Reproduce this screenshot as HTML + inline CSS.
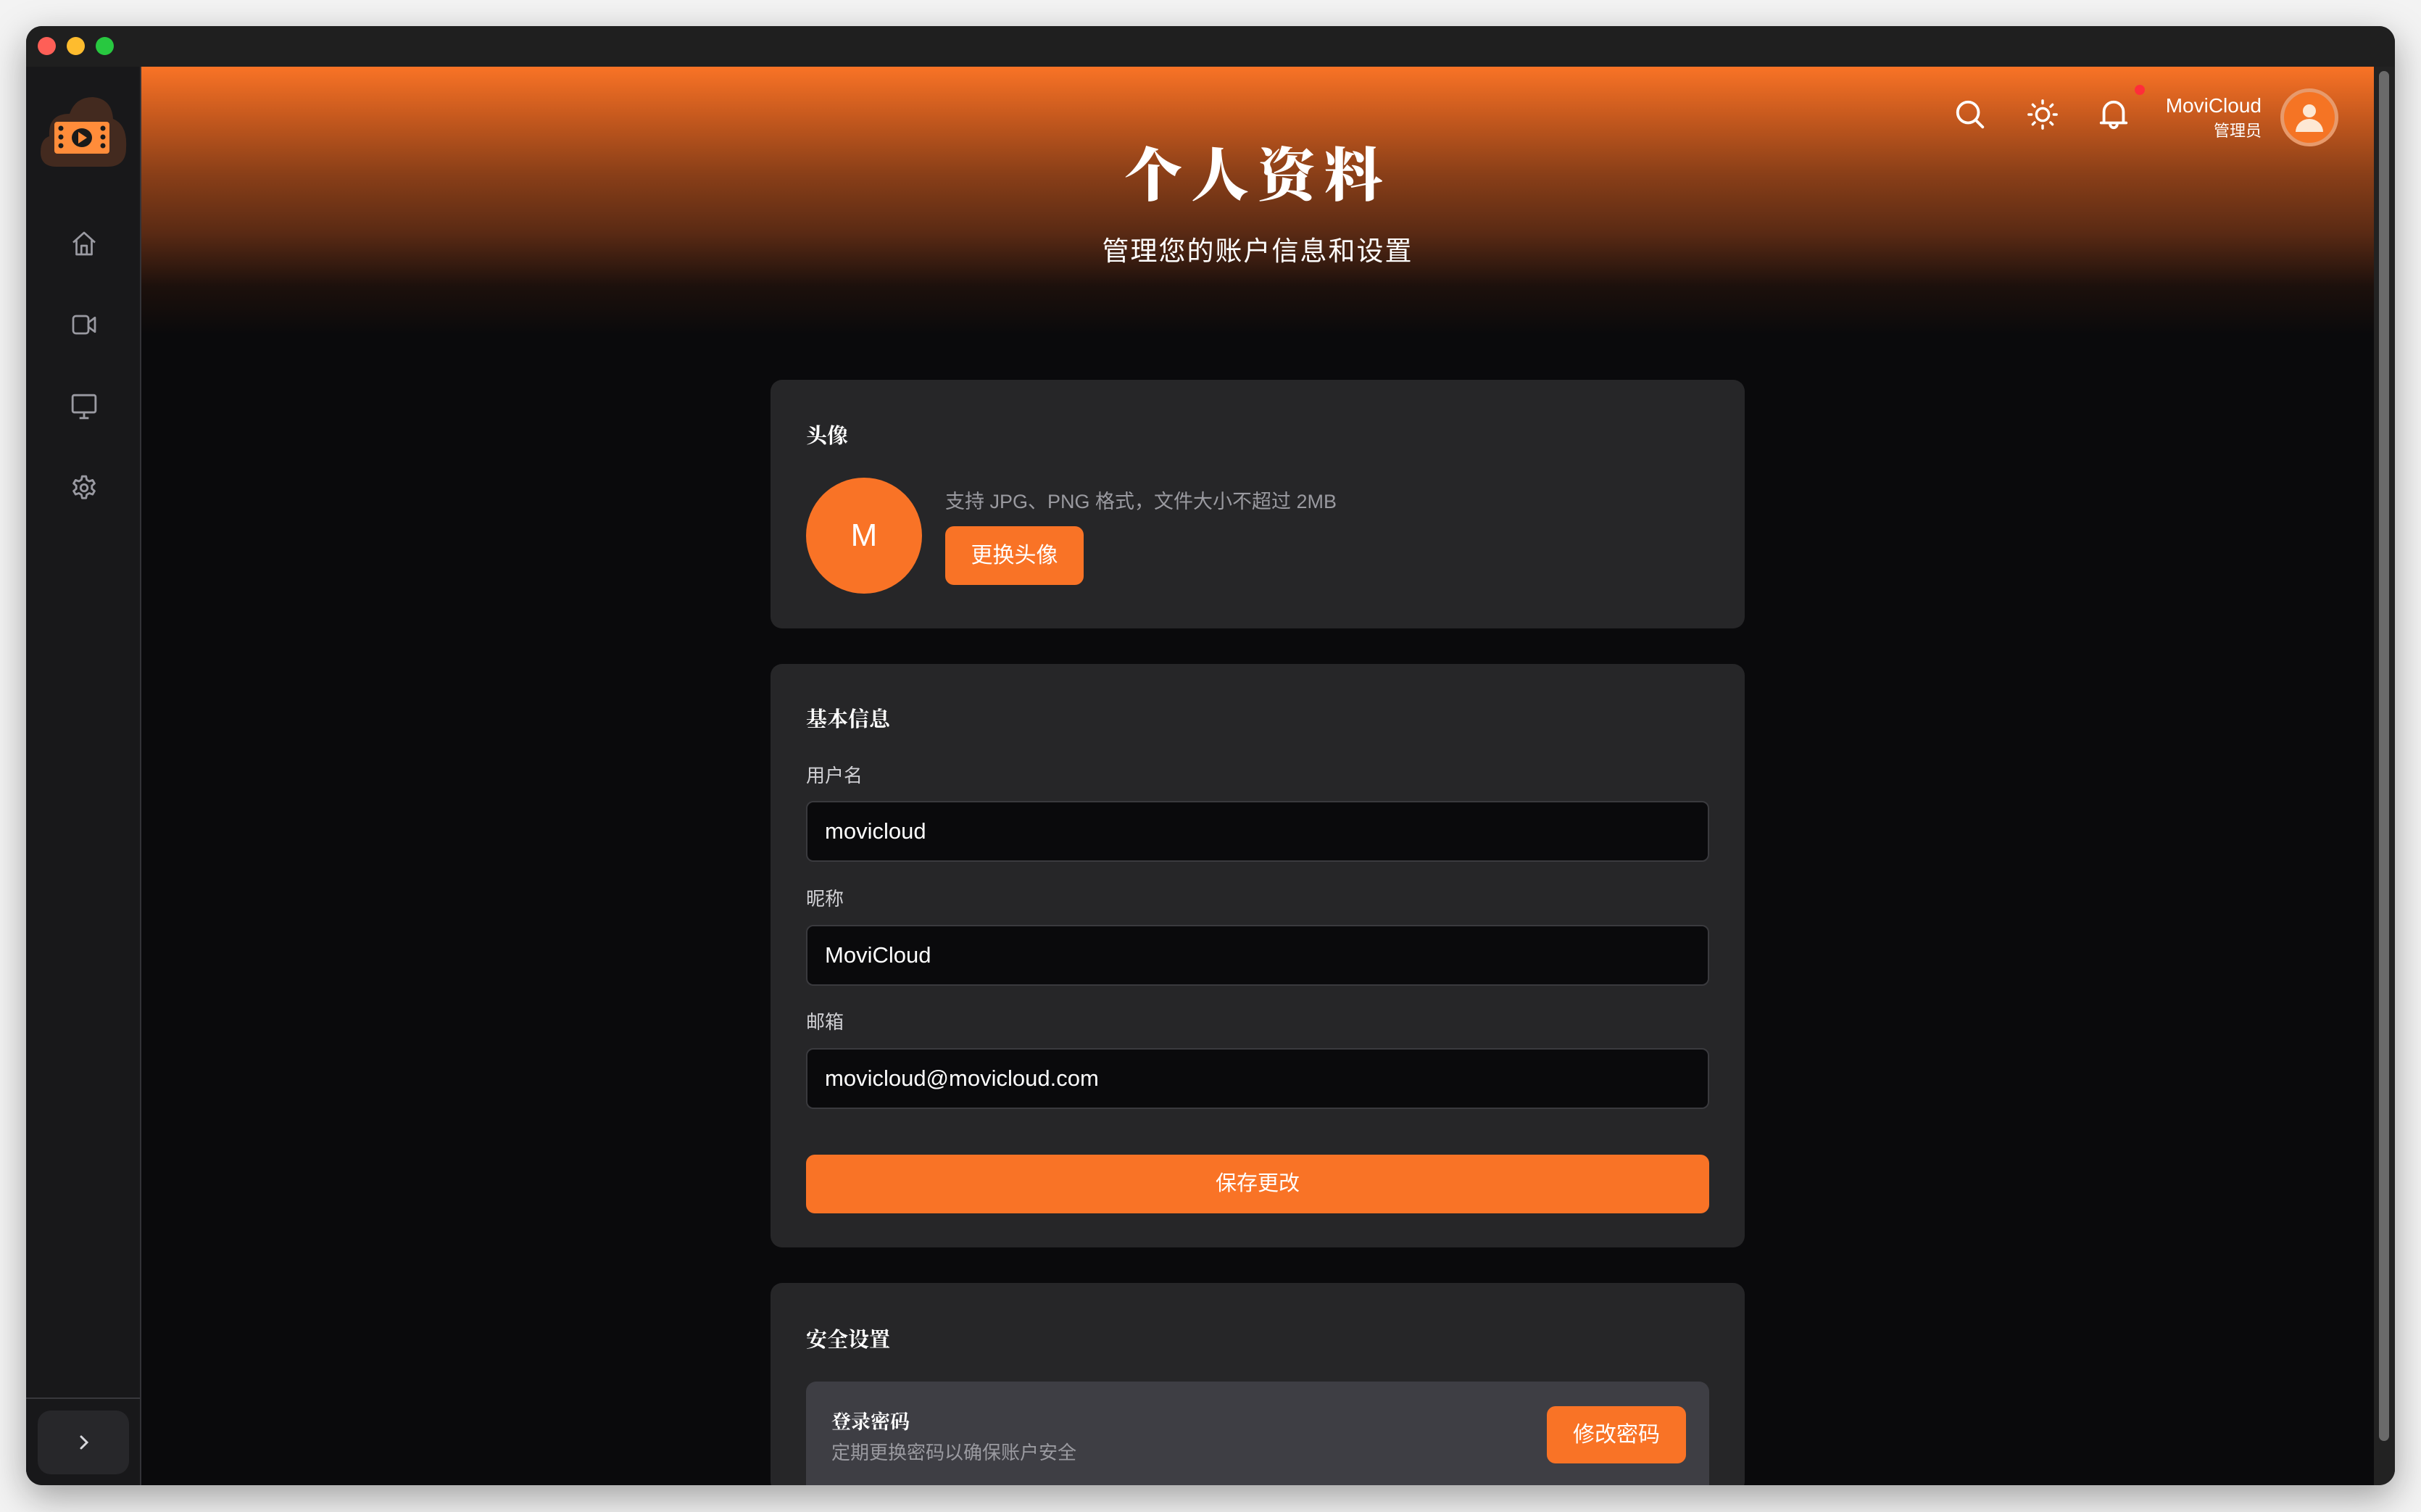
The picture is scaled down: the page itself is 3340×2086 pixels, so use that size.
<!DOCTYPE html>
<html><head><meta charset="utf-8"><style>
*{margin:0;padding:0;box-sizing:border-box}
html,body{overflow:hidden}
body{width:3340px;height:2086px;background:#f3f3f3;position:relative;overflow:hidden;font-family:"Liberation Sans","Noto Sans CJK SC",sans-serif}
.win{position:absolute;left:36px;top:36px;width:3268px;height:2013px;border-radius:22px;overflow:hidden;background:#0a0a0c;box-shadow:0 16px 50px rgba(0,0,0,.35)}
.tb{position:absolute;left:0;top:0;right:0;height:56px;background:#1f1f1f}
.dot{position:absolute;top:15px;width:25px;height:25px;border-radius:50%}
.side{position:absolute;left:0;top:56px;width:159px;bottom:0;background:#18181a;border-right:2px solid #333338}
.main{position:absolute;left:159px;top:56px;right:29px;bottom:0;background:#0a0a0c;overflow:hidden}
.hdr{position:absolute;left:0;top:0;right:0;height:370px;background:linear-gradient(180deg,#f97326 0%,#c85a1e 18%,#8a3f18 40%,#5a2a14 62%,#1c100c 82%,#0a0a0c 100%)}
.sb{position:absolute;right:0;top:56px;width:29px;bottom:0;background:#222}
.sb i{position:absolute;left:7px;top:6px;width:14px;height:1890px;border-radius:7px;background:#6a6a6a}
.card{position:absolute;left:868px;width:1344px;background:#262628;border-radius:16px;overflow:hidden}
.h{position:absolute;left:49px;color:#fff;font-family:"Noto Serif CJK SC",serif;font-weight:700;font-size:29px}
.lbl{position:absolute;left:49px;color:#d0d0d4;font-size:26px}
.inp{position:absolute;left:49px;width:1246px;height:84px;background:#0a0a0c;border:2px solid #3a3a3e;border-radius:10px;color:#fff;font-size:31px;padding-left:24px;line-height:80px}
.btn{position:absolute;background:#f97326;color:#fff;border-radius:12px;text-align:center;font-size:30px}
svg{position:absolute}
</style></head><body>
<div class="win">
<div class="tb"><div class="dot" style="left:16px;background:#fe5f57"></div><div class="dot" style="left:56px;background:#febc2e"></div><div class="dot" style="left:96px;background:#28c840"></div></div>
<div class="side">
<svg style="left:20px;top:40px" width="120" height="100" viewBox="0 0 120 100"><path d="M22 98 Q0 98 0 78 Q0 60 12 56 Q10 25 40 25 Q48 2 72 2 Q98 4 100 32 Q120 40 118 72 Q118 98 92 98Z" fill="#432a1f"/><rect x="19" y="36" width="76" height="44" rx="4" fill="#ff8c3a"/><circle cx="28" cy="45" r="3.5" fill="#1a1a1a"/><circle cx="28" cy="57" r="3.5" fill="#1a1a1a"/><circle cx="28" cy="69" r="3.5" fill="#1a1a1a"/><circle cx="86" cy="45" r="3.5" fill="#1a1a1a"/><circle cx="86" cy="57" r="3.5" fill="#1a1a1a"/><circle cx="86" cy="69" r="3.5" fill="#1a1a1a"/><ellipse cx="57" cy="58" rx="14" ry="13" fill="#1a1a1a"/><path d="M52 50 L64 58 L52 66Z" fill="#ff8c3a"/></svg>
<svg style="left:61px;top:226px" width="38" height="36" viewBox="0 0 24 24" fill="none" stroke="#9a9aa2" stroke-width="1.8" stroke-linejoin="round"><path d="M2 11 L12 2 L22 11 M5 9 V22 H19 V9 M9.5 22 V14 H14.5 V22"/></svg>
<svg style="left:61px;top:338px" width="38" height="36" viewBox="0 0 24 24" fill="none" stroke="#9a9aa2" stroke-width="1.8" stroke-linejoin="round"><rect x="2" y="4" width="14" height="16" rx="2.5"/><path d="M16 10 L22 5.5 V18.5 L16 14Z"/></svg>
<svg style="left:61px;top:450px" width="38" height="38" viewBox="0 0 24 24" fill="none" stroke="#9a9aa2" stroke-width="1.8" stroke-linejoin="round"><rect x="2" y="2" width="20" height="15" rx="1.5"/><path d="M12 17 V22 M8 22 H16"/></svg>
<svg style="left:61px;top:562px" width="38" height="38" viewBox="0 0 24 24" fill="none" stroke="#9a9aa2" stroke-width="1.8" stroke-linejoin="round"><path d="M10.3 2h3.4l.6 3 2.2 1.3 2.9-1 1.7 2.9-2.3 2v2.6l2.3 2-1.7 2.9-2.9-1-2.2 1.3-.6 3h-3.4l-.6-3-2.2-1.3-2.9 1-1.700-2.9 2.3-2v-2.6l-2.3-2 1.7-2.9 2.9 1 2.2-1.3z"/><circle cx="12" cy="12" r="3"/></svg>
<div style="position:absolute;left:0;right:0;top:1836px;height:2px;background:#38383c"></div>
<div style="position:absolute;left:16px;top:1854px;width:126px;height:88px;border-radius:18px;background:#27272a"></div>
<svg style="left:68px;top:1884px" width="24" height="28" viewBox="0 0 24 28" fill="none" stroke="#d8d8dc" stroke-width="3" stroke-linecap="round"><path d="M8 6 L16 14 L8 22"/></svg>
</div>
<div class="main">
<div class="hdr"></div>
<div style="position:absolute;left:0;right:0;top:104px;text-align:center;color:#fff;font-family:'Noto Serif CJK SC',serif;font-weight:900;font-size:80px;letter-spacing:12px;line-height:1">个人资料</div>
<div style="position:absolute;left:0;right:0;top:236px;text-align:center;color:#fff;font-size:37px;letter-spacing:2px;line-height:1">管理您的账户信息和设置</div>
<svg style="left:2500px;top:43px" width="46" height="46" viewBox="0 0 24 24" fill="none" stroke="#fff" stroke-width="2" stroke-linecap="round"><circle cx="10.5" cy="10.5" r="7.5"/><path d="M16 16 L21 21"/></svg>
<svg style="left:2600px;top:43px" width="46" height="46" viewBox="0 0 24 24" fill="none" stroke="#fff" stroke-width="1.8" stroke-linecap="round"><circle cx="12" cy="12" r="4.5"/><path d="M12 2v2M12 20v2M2 12h2M20 12h2M4.9 4.9l1.4 1.4M17.7 17.7l1.4 1.4M4.9 19.1l1.4-1.4M17.7 6.3l1.4-1.4"/></svg>
<svg style="left:2698px;top:41px" width="46" height="50" viewBox="0 0 24 26" fill="none" stroke="#fff" stroke-width="2" stroke-linejoin="round"><path d="M5 19 V11 A7 7 0 0 1 19 11 V19 H21 H3Z M9.5 20 A2.5 2.5 0 0 0 14.5 20"/></svg>
<div style="position:absolute;left:2750px;top:25px;width:14px;height:14px;border-radius:50%;background:#ff2d3a"></div>
<div style="position:absolute;left:0;text-align:right;top:40px;width:2925px;color:#fff;font-size:28px;line-height:1">MoviCloud</div>
<div style="position:absolute;left:0;text-align:right;top:78px;width:2925px;color:#fff;font-size:22px;line-height:1">管理员</div>
<div style="position:absolute;left:2951px;top:30px;width:80px;height:80px;border-radius:50%;background:#f57424;border:5px solid #e79a6c"></div>
<svg style="left:2967px;top:46px" width="48" height="48" viewBox="0 0 24 24" fill="#fde8d4"><circle cx="12" cy="7.5" r="4.5"/><path d="M2.5 22 A9.5 9 0 0 1 21.5 22Z"/></svg>

<div class="card" style="top:432px;height:343px">
<div class="h" style="top:55px">头像</div>
<div style="position:absolute;left:49px;top:135px;width:160px;height:160px;border-radius:50%;background:#f97326;color:#fff;font-size:44px;text-align:center;line-height:160px">M</div>
<div style="position:absolute;left:241px;top:146px;color:#9a9aa0;font-size:27px">支持 JPG、PNG 格式，文件大小不超过 2MB</div>
<div class="btn" style="left:241px;top:202px;width:191px;height:81px;line-height:81px">更换头像</div>
</div>

<div class="card" style="top:824px;height:805px">
<div class="h" style="top:54px">基本信息</div>
<div class="lbl" style="top:134px">用户名</div>
<div class="inp" style="top:189px">movicloud</div>
<div class="lbl" style="top:304px">昵称</div>
<div class="inp" style="top:360px">MoviCloud</div>
<div class="lbl" style="top:474px">邮箱</div>
<div class="inp" style="top:530px">movicloud@movicloud.com</div>
<div class="btn" style="left:49px;top:677px;width:1246px;height:81px;line-height:81px;font-size:29px">保存更改</div>
</div>

<div class="card" style="top:1678px;height:290px">
<div class="h" style="top:56px">安全设置</div>
<div style="position:absolute;left:49px;top:136px;width:1246px;height:300px;background:#3e3e44;border-radius:14px">
<div style="position:absolute;left:35px;top:34px;color:#fff;font-weight:700;font-size:27px;font-family:'Noto Serif CJK SC',serif">登录密码</div>
<div style="position:absolute;left:35px;top:78px;color:#9a9aa0;font-size:26px">定期更换密码以确保账户安全</div>
<div class="btn" style="left:1022px;top:34px;width:192px;height:79px;line-height:79px">修改密码</div>
</div>
</div>
</div>
<div class="sb"><i></i></div>
</div>
</body></html>
